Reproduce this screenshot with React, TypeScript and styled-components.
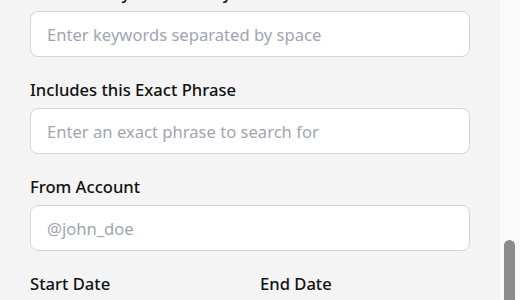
import React, { useLayoutEffect, useRef } from 'react';
import styled, { createGlobalStyle } from 'styled-components';

const GlobalStyle = createGlobalStyle`
  html, body {
    margin: 0;
    padding: 0;
    overflow: hidden;
  }
  body {
    font-family: 'Noto Sans', 'Open Sans', sans-serif;
    background: #f4f4f4;
  }
  * {
    box-sizing: border-box;
  }
`;

const Viewport = styled.div`
  display: flex;
  width: 520px;
  height: 300px;
`;

const Pane = styled.div`
  flex: 1;
  height: 300px;
  overflow: hidden;
  background: #f4f4f4;
`;

const Track = styled.div`
  width: 20px;
  height: 300px;
  background: #fafafa;
  display: flex;
  flex-direction: column;
  padding: 240px 5px 0 4px;
`;

const Thumb = styled.div`
  flex: 1;
  background: #8c8c8c;
  border-radius: 6px 6px 0 0;
`;

const Form = styled.form`
  display: flex;
  flex-direction: column;
  gap: 21px;
  padding: 40px 30px 120px;
`;

const Heading = styled.h2`
  margin: 0;
  font-size: 22px;
  font-weight: 600;
  color: #111;
`;

const Field = styled.div`
  display: flex;
  flex-direction: column;
  gap: 6px;
`;

const Row = styled.div`
  display: grid;
  grid-template-columns: 1fr 1fr;
  gap: 20px;
`;

const Label = styled.label`
  font-size: 16.6px;
  line-height: 24px;
  font-weight: 500;
  color: #111;
`;

const Input = styled.input`
  width: 100%;
  height: 46px;
  padding: 0 16px;
  border: 1px solid #d4d5dc;
  border-radius: 8px;
  background: #fff;
  font-family: inherit;
  font-size: 16.6px;
  color: #111;
  outline: none;

  &::placeholder {
    color: #a1a5b0;
  }
`;

const App: React.FC = () => {
  const paneRef = useRef<HTMLDivElement>(null);
  const firstRef = useRef<HTMLInputElement>(null);

  useLayoutEffect(() => {
    if (paneRef.current && firstRef.current) {
      paneRef.current.scrollTop = firstRef.current.offsetTop - paneRef.current.offsetTop - 11;
    }
  }, []);

  return (
    <>
      <GlobalStyle />
      <Viewport>
        <Pane ref={paneRef}>
          <Form onSubmit={(e) => e.preventDefault()}>
            <Heading>Advanced Search</Heading>
            <Field>
              <Label>Includes any of these Keywords</Label>
              <Input ref={firstRef} placeholder="Enter keywords separated by space" />
            </Field>
            <Field>
              <Label>Includes this Exact Phrase</Label>
              <Input placeholder="Enter an exact phrase to search for" />
            </Field>
            <Field>
              <Label>From Account</Label>
              <Input placeholder="@john_doe" />
            </Field>
            <Row>
              <Field>
                <Label>Start Date</Label>
                <Input type="date" />
              </Field>
              <Field>
                <Label>End Date</Label>
                <Input type="date" />
              </Field>
            </Row>
          </Form>
        </Pane>
        <Track>
          <Thumb />
        </Track>
      </Viewport>
    </>
  );
};

export default App;
